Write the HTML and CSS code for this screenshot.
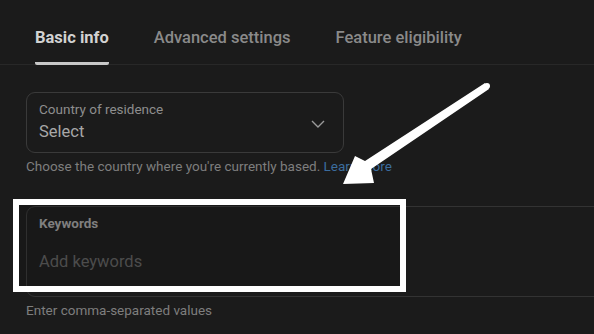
FILE: index.html
```html
<!DOCTYPE html>
<html lang="en">
<head>
  <meta charset="UTF-8">
  <meta name="viewport" content="width=device-width, initial-scale=1.0">
  <title>Basic info</title>
  <link rel="stylesheet" href="styles.css">
</head>
<body>
  <nav class="tabs">
    <a class="tab tab-active" href="#">Basic info</a>
    <a class="tab" href="#">Advanced settings</a>
    <a class="tab" href="#">Feature eligibility</a>
  </nav>

  <section class="form">
    <!-- Country select -->
    <div class="field field-select">
      <div class="field-text">
        <span class="field-label">Country of residence</span>
        <span class="field-value">Select</span>
      </div>
      <svg class="chevron" width="14" height="8" viewBox="0 0 14 8">
        <path d="M1 1l6 6 6-6" fill="none" stroke="#9a9a9a" stroke-width="1.4"/>
      </svg>
    </div>
    <p class="help">Choose the country where you're currently based. <a href="#">Learn more</a></p>

    <!-- Keywords input, runs on past the right edge -->
    <div class="field field-keywords">
      <span class="field-label field-label-bold">Keywords</span>
      <span class="field-placeholder">Add keywords</span>
    </div>
    <p class="help">Enter comma-separated values</p>
  </section>

  <!-- Annotation drawn over the page -->
  <div class="mark-box"></div>
  <svg class="mark-arrow" width="594" height="334" viewBox="0 0 594 334">
    <polygon points="489,89 371,169 374,183 343,184 355,156 365,161 485,83" fill="#fff"/>
    <circle cx="487" cy="86" r="3" fill="#fff"/>
  </svg>
</body>
</html>
```

FILE: styles.css
```css
body {
  margin: 0;
  background: #1b1b1b;
  font-family: Roboto, "Liberation Sans", sans-serif;
  height: 334px;
  overflow: hidden;
  position: relative;
}
.tabs {
  display: flex;
  gap: 45px;
  padding: 0 0 0 35px;
  border-bottom: 1px solid #282828;
}
.tab {
  padding: 28px 0 14px;
  font-size: 16.5px;
  line-height: 20px;
  font-weight: 500;
  color: #8a8a8a;
  text-decoration: none;
  border-bottom: 3px solid transparent;
  margin-bottom: -1px;
}
.tab-active {
  color: #d2d2d2;
  font-weight: 700;
  border-bottom-color: #c8c8c8;
  border-radius: 2px;
}
.form {
  padding: 27px 0 0 26px;
  overflow: hidden;
}
.field {
  box-sizing: border-box;
  border: 1px solid #3a3a3a;
  border-radius: 9px;
}
.field-select {
  width: 318px;
  height: 61px;
  display: flex;
  align-items: flex-start;
  justify-content: space-between;
  padding: 8px 18px 0 12px;
}
.field-text {
  display: flex;
  flex-direction: column;
  gap: 5px;
}
.field-label {
  font-size: 13.5px;
  line-height: 16px;
  color: #8e8e8e;
}
.field-label-bold {
  font-weight: 700;
  color: #8a8a8a;
}
.field-value {
  font-size: 16.5px;
  line-height: 20px;
  color: #a8a8a8;
}
.chevron {
  align-self: center;
  margin-top: -6px;
}
.help {
  margin: 5px 0 0;
  font-size: 13.5px;
  line-height: 16px;
  color: #7e7e7e;
}
.help a {
  color: #3b6d9e;
  text-decoration: none;
}
.field-keywords {
  margin-top: 32px;
  width: 620px;
  height: 91px;
  display: flex;
  flex-direction: column;
  padding: 8px 0 0 12px;
  border-color: #333;
}
.field-placeholder {
  margin-top: 21px;
  font-size: 16.5px;
  line-height: 20px;
  color: #535353;
}
.mark-box {
  position: absolute;
  left: 13px;
  top: 199px;
  width: 381px;
  height: 81px;
  border: 6px solid #fff;
  background: rgba(0, 0, 0, 0.08);
}
.mark-arrow {
  position: absolute;
  left: 0;
  top: 0;
}
```
